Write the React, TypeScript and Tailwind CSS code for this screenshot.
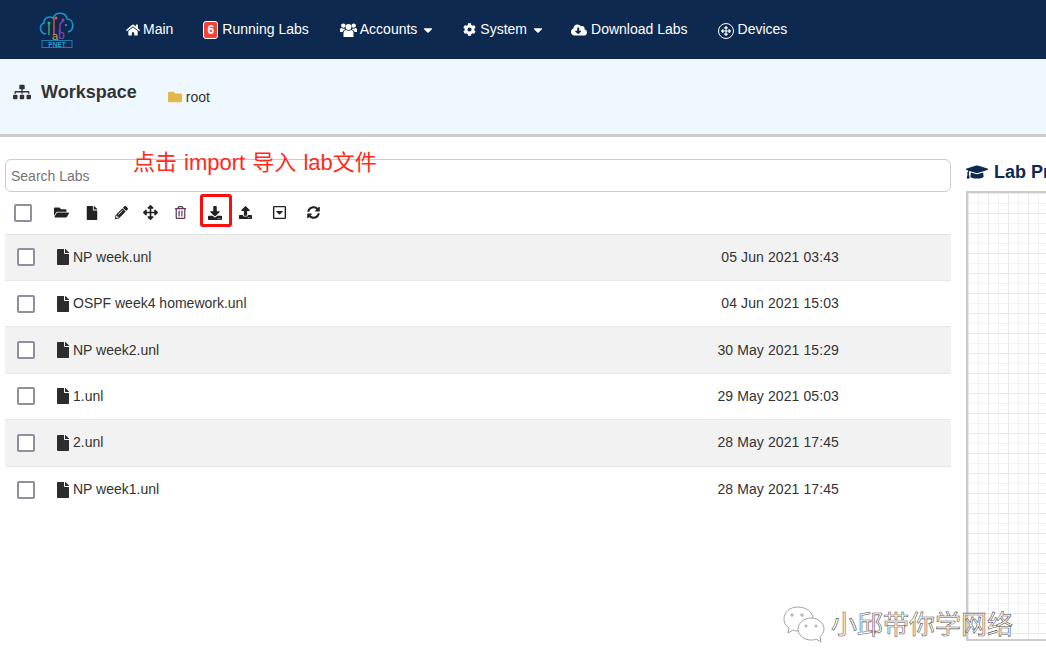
import { FaHome, FaCog, FaCloudDownloadAlt, FaSitemap, FaFolder, FaFolderOpen, FaFile, FaPencilAlt, FaArrowsAlt, FaRegTrashAlt, FaDownload, FaUpload, FaRegCaretSquareDown, FaSyncAlt, FaGraduationCap, FaCaretDown } from "react-icons/fa";

const labs = [
  { name: "NP week.unl", date: "05 Jun 2021 03:43" },
  { name: "OSPF week4 homework.unl", date: "04 Jun 2021 15:03" },
  { name: "NP week2.unl", date: "30 May 2021 15:29" },
  { name: "1.unl", date: "29 May 2021 05:03" },
  { name: "2.unl", date: "28 May 2021 17:45" },
  { name: "NP week1.unl", date: "28 May 2021 17:45" },
];

function Logo() {
  return (
    <svg width="36" height="38" viewBox="0 0 36 38" className="shrink-0">
      <path d="M7 24 C0 23 0 15 5 13 C5 7 11 6 14 8 C17 1 27 2 28 9 C35 9 36 20 29 22" fill="none" stroke="#1a93c8" strokeWidth="1.6" />
      <path d="M10 25 V14" stroke="#3fae6a" strokeWidth="1.4" fill="none" />
      <path d="M15 25 V8" stroke="#e2574c" strokeWidth="1.4" fill="none" />
      <path d="M21 22 V14 L24 11" stroke="#8e44ad" strokeWidth="1.4" fill="none" />
      <circle cx="10" cy="13" r="1.5" fill="#3fae6a" />
      <circle cx="17" cy="8" r="1.5" fill="#e2574c" />
      <circle cx="24" cy="10" r="1.5" fill="#8e44ad" />
      <circle cx="27" cy="15" r="1" fill="#3bb0dc" />
      <text x="13" y="30" fontSize="11" fill="#d9a13b" fontFamily="Liberation Sans">a</text>
      <text x="19" y="29" fontSize="12" fill="#8e44ad" fontFamily="Liberation Sans">b</text>
      <rect x="3" y="30.5" width="30" height="7" fill="#0e294f" stroke="#1a7fb0" strokeWidth="1" />
      <text x="18" y="36.5" fontSize="6.5" textAnchor="middle" fill="#2a9fd0" fontWeight="700" fontFamily="Liberation Sans">PNET</text>
    </svg>
  );
}

// FontAwesome 4 style "users" glyph, heavier than the one in the package
function UsersIcon() {
  return (
    <svg width="17" height="14" viewBox="0 0 17 14" fill="white" className="mr-[3px] shrink-0">
      <circle cx="8.5" cy="4" r="2.9" />
      <path d="M3.5 14 V10 C3.5 8 5 7 6 7 C7 8 10 8 11 7 C12 7 13.5 8 13.5 10 V14 Z" />
      <circle cx="3.3" cy="2.6" r="2.2" />
      <circle cx="13.7" cy="2.6" r="2.2" />
      <path d="M0 9 V6.5 C0 5.5 1 5 1.5 5 C2.5 5.8 3.5 5.8 4.4 5.6 C4.6 6.5 5 6.6 5 6.8 C3.6 7.2 2.8 8 2.6 9 Z" />
      <path d="M17 9 V6.5 C17 5.5 16 5 15.5 5 C14.5 5.8 13.5 5.8 12.6 5.6 C12.4 6.5 12 6.6 12 6.8 C13.4 7.2 14.2 8 14.4 9 Z" />
    </svg>
  );
}

function NavItem({ icon, label, caret }: { icon: React.ReactNode; label: string; caret?: boolean }) {
  return (
    <div className="flex items-center text-[14px] text-white">
      {icon}
      <span>{label}</span>
      {caret && <FaCaretDown className="ml-[4px] text-[14px]" />}
    </div>
  );
}

export default function App() {
  return (
    <div className="relative h-[672px] w-[1046px] overflow-hidden bg-white font-['Liberation_Sans','Noto_Sans_CJK_SC',sans-serif] text-[#333]">
      <header className="flex h-[59px] items-center bg-[#0e294f]">
        <div className="ml-[39px] mt-[-1px]"><Logo /></div>
        <nav className="ml-[51px] flex items-center">
          <NavItem icon={<FaHome className="mr-[3px] text-[14px]" />} label="Main" />
          <div className="ml-[30px] flex items-center text-[14px] text-white">
            <span className="mr-[4px] flex h-[18px] w-[15px] items-center justify-center rounded-[3px] border border-white bg-[#f44336] text-[12px] font-bold">6</span>
            <span>Running Labs</span>
          </div>
          <div className="ml-[31px]"><NavItem icon={<UsersIcon />} label="Accounts" caret /></div>
          <div className="ml-[28px]"><NavItem icon={<FaCog className="mr-[4px] text-[13px]" />} label="System" caret /></div>
          <div className="ml-[26px]"><NavItem icon={<FaCloudDownloadAlt className="mr-[4px] text-[16px]" />} label="Download Labs" /></div>
          <div className="ml-[30px] flex items-center text-[14px] text-white">
            <span className="mr-[4px] mt-[2px] flex h-[16px] w-[16px] items-center justify-center rounded-full border border-white">
              <FaArrowsAlt className="text-[10px]" />
            </span>
            <span>Devices</span>
          </div>
        </nav>
      </header>

      <div className="box-content flex h-[75px] items-start border-b-[3px] border-[#ccc] bg-[#f0f8ff]">
        <FaSitemap className="ml-[13px] mt-[24px] text-[18px] text-[#333]" />
        <h1 className="ml-[10px] mt-[21px] text-[18px] font-bold leading-[24px]">Workspace</h1>
        <div className="ml-[31px] mt-[28px] flex items-center text-[14px] leading-[20px]">
          <FaFolder className="mr-[4px] text-[14px] text-[#e0b84c]" />
          <span>root</span>
        </div>
      </div>

      <div className="flex">
        <main className="ml-[5px] w-[946px] shrink-0 pt-[22px]">
          <input
            placeholder="Search Labs"
            className="block h-[33px] w-full rounded-[6px] border border-[#ccc] px-[5px] text-[14px] outline-none placeholder:text-[#757575]"
          />
          <div className="flex h-[41.6px] items-center text-[#222]">
            <span className="ml-[9px] h-[18px] w-[18px] rounded-[2px] border-2 border-[#8f8f9d] bg-white" />
            <div className="ml-[22px] flex items-center">
              <FaFolderOpen className="text-[15px]" />
              <FaFile className="ml-[16px] text-[14px]" />
              <FaPencilAlt className="ml-[16px] text-[13px]" />
              <FaArrowsAlt className="ml-[15px] text-[15px]" />
              <FaRegTrashAlt className="ml-[16px] text-[13px] text-[#5c3a5c]" />
              <FaDownload className="ml-[21px] text-[14px]" />
              <FaUpload className="ml-[17px] text-[13px]" />
              <FaRegCaretSquareDown className="ml-[20px] text-[15px]" />
              <FaSyncAlt className="ml-[20px] text-[13px]" />
            </div>
          </div>
          <div className="border-t border-[#e3e3e3]">
            {labs.map((lab, i) => (
              <div
                key={lab.name}
                className={`flex h-[46.4px] items-center border-b border-[#e8e8e8] text-[14px] last:border-b-0 ${i % 2 === 0 ? "bg-[#f2f2f2]" : "bg-white"}`}
              >
                <span className="ml-[12px] h-[18px] w-[18px] rounded-[2px] border-2 border-[#8f8f9d] bg-white" />
                <FaFile className="ml-[20px] mr-[2px] text-[16px] text-[#2d2d2d]" />
                <span>{lab.name}</span>
                <span className="ml-auto mr-[112px] tracking-[0.1px]">{lab.date}</span>
              </div>
            ))}
          </div>
        </main>

        <aside className="ml-[15px] flex-1 pt-[24px]">
          <div className="flex h-[22px] items-center whitespace-nowrap text-[18px] font-bold text-[#0e294f]">
            <FaGraduationCap className="mr-[6px] text-[22px]" />
            <span>Lab Preview</span>
          </div>
          <div className="mt-[8px] h-[450px] w-[200px] border-2 border-r-0 border-[#ccc] bg-white bg-[linear-gradient(#e8e8e8_1px,transparent_1px),linear-gradient(90deg,#e8e8e8_1px,transparent_1px),linear-gradient(#f2f2f2_1px,transparent_1px),linear-gradient(90deg,#f2f2f2_1px,transparent_1px)] bg-[size:20px_20px,20px_20px,10px_10px,10px_10px]" />
        </aside>
      </div>

      {/* annotation laid over the screenshot */}
      <div className="absolute left-[133px] top-[149px] whitespace-nowrap text-[22px] leading-[28px] text-[#ff2a1a] [word-spacing:1px]">点击 import 导入 lab文件</div>
      <div className="absolute left-[200px] top-[194px] h-[33px] w-[32px] rounded-[3px] border-[3px] border-[#fb0d0d]" />

      {/* watermark */}
      <div className="absolute left-[783px] top-[606px] flex items-center">
        <svg width="42" height="38" viewBox="0 0 42 38" fill="#fff" stroke="#8a8a8a" strokeWidth="0.8">
          <path d="M15 1 C7 1 1 6 1 13 C1 17 3 20 6 22 L5 27 L10 24 C12 25 14 25 16 25 C24 25 30 20 30 13 C30 6 23 1 15 1 Z" />
          <path d="M28 12 C21 12 15 17 15 23 C15 29 21 34 28 34 C30 34 31 34 33 33 L38 36 L37 31 C39 29 41 26 41 23 C41 17 35 12 28 12 Z" />
          <circle cx="9" cy="9" r="1.2" />
          <circle cx="19" cy="9" r="1.2" />
          <circle cx="23" cy="20" r="1" />
          <circle cx="33" cy="20" r="1" />
        </svg>
        <span className="ml-[6px] text-[26px] leading-[32px] text-white [-webkit-text-stroke:0.6px_#555]">小邱带你学网络</span>
      </div>
    </div>
  );
}
